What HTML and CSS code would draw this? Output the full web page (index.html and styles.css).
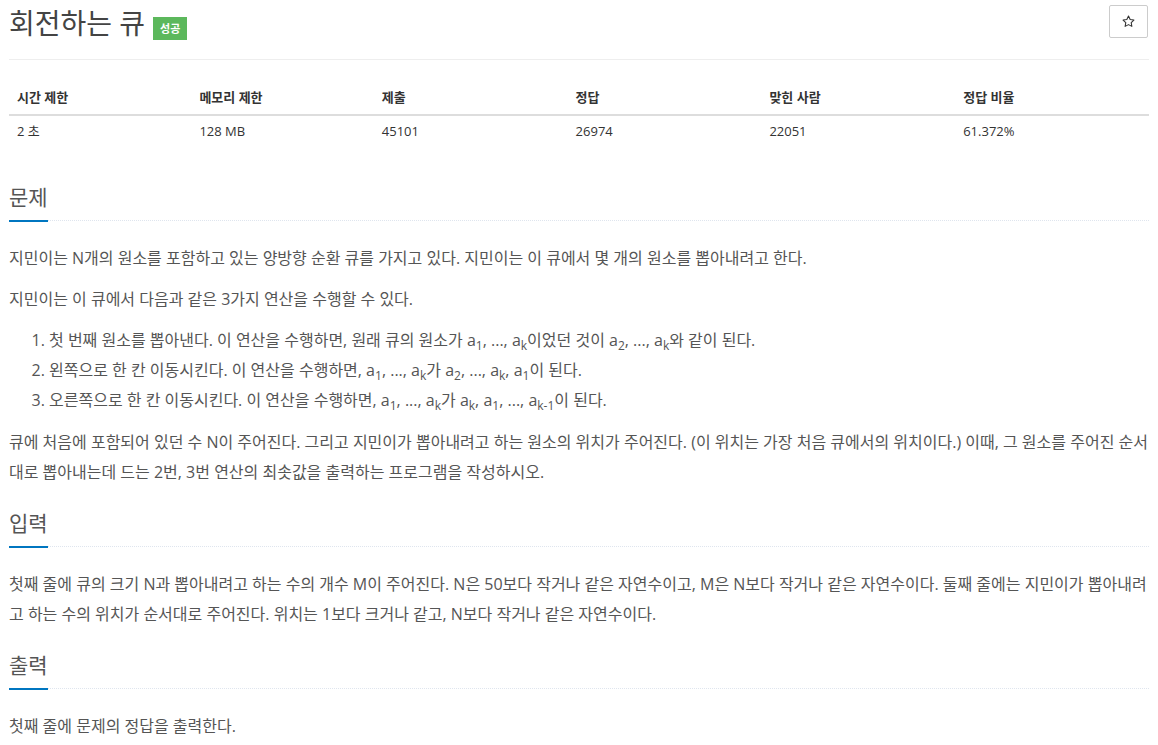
FILE: index.html
```html
<!DOCTYPE html>
<html lang="ko">
<head>
    <meta charset="UTF-8">
    <meta name="viewport" content="width=device-width, initial-scale=1.0">
    <title>회전하는 큐</title>
    <link rel="stylesheet" href="styles.css">
</head>
<body>
    <div class="page">
        <div class="page-header">
            <h1 class="problem-title">회전하는 큐<span class="label-success">성공</span></h1>
            <button class="star-btn" title="즐겨찾기">
                <svg width="13" height="13" viewBox="0 0 24 24">
                    <polygon points="12,2 15.09,8.26 22,9.27 17,14.14 18.18,21.02 12,17.77 5.82,21.02 7,14.14 2,9.27 8.91,8.26" fill="none" stroke="#333" stroke-width="2" stroke-linejoin="round"/>
                </svg>
            </button>
        </div>

        <table class="problem-info">
            <thead>
                <tr>
                    <th class="col-narrow">시간 제한</th>
                    <th class="col-narrow">메모리 제한</th>
                    <th>제출</th>
                    <th>정답</th>
                    <th>맞힌 사람</th>
                    <th>정답 비율</th>
                </tr>
            </thead>
            <tbody>
                <tr>
                    <td>2 초</td>
                    <td>128 MB</td>
                    <td>45101</td>
                    <td>26974</td>
                    <td>22051</td>
                    <td>61.372%</td>
                </tr>
            </tbody>
        </table>

        <section class="problem-section">
            <div class="headline"><h2>문제</h2></div>
            <div class="problem-text">
                <p>지민이는 N개의 원소를 포함하고 있는 양방향 순환 큐를 가지고 있다. 지민이는 이 큐에서 몇 개의 원소를 뽑아내려고 한다.</p>
                <p>지민이는 이 큐에서 다음과 같은 3가지 연산을 수행할 수 있다.</p>
                <ol>
                    <li>첫 번째 원소를 뽑아낸다. 이 연산을 수행하면, 원래 큐의 원소가 a<sub>1</sub>, ..., a<sub>k</sub>이었던 것이 a<sub>2</sub>, ..., a<sub>k</sub>와 같이 된다.</li>
                    <li>왼쪽으로 한 칸 이동시킨다. 이 연산을 수행하면, a<sub>1</sub>, ..., a<sub>k</sub>가 a<sub>2</sub>, ..., a<sub>k</sub>, a<sub>1</sub>이 된다.</li>
                    <li>오른쪽으로 한 칸 이동시킨다. 이 연산을 수행하면, a<sub>1</sub>, ..., a<sub>k</sub>가 a<sub>k</sub>, a<sub>1</sub>, ..., a<sub>k-1</sub>이 된다.</li>
                </ol>
                <p>큐에 처음에 포함되어 있던 수 N이 주어진다. 그리고 지민이가 뽑아내려고 하는 원소의 위치가 주어진다. (이 위치는 가장 처음 큐에서의 위치이다.) 이때, 그 원소를 주어진 순서대로 뽑아내는데 드는 2번, 3번 연산의 최솟값을 출력하는 프로그램을 작성하시오.</p>
            </div>
        </section>

        <section class="problem-section">
            <div class="headline"><h2>입력</h2></div>
            <div class="problem-text">
                <p>첫째 줄에 큐의 크기 N과 뽑아내려고 하는 수의 개수 M이 주어진다. N은 50보다 작거나 같은 자연수이고, M은 N보다 작거나 같은 자연수이다. 둘째 줄에는 지민이가 뽑아내려고 하는 수의 위치가 순서대로 주어진다. 위치는 1보다 크거나 같고, N보다 작거나 같은 자연수이다.</p>
            </div>
        </section>

        <section class="problem-section">
            <div class="headline"><h2>출력</h2></div>
            <div class="problem-text">
                <p>첫째 줄에 문제의 정답을 출력한다.</p>
            </div>
        </section>
    </div>
</body>
</html>
```

FILE: styles.css
```css
* {
    box-sizing: border-box;
}

body {
    margin: 0;
    font-family: "Open Sans", "Noto Sans CJK KR", sans-serif;
    color: #555;
    background-color: #fff;
}

.page {
    padding: 0 9px;
}

.page-header {
    display: flex;
    justify-content: space-between;
    align-items: flex-start;
    padding: 5px 0 19px;
    border-bottom: 1px solid #eee;
}

.problem-title {
    display: flex;
    align-items: flex-start;
    margin: 3px 0 0;
    font-size: 28px;
    line-height: 30px;
    font-weight: normal;
    color: #444;
}

.label-success {
    margin: 9px 0 0 8px;
    background-color: #5cb85c;
    color: #fff;
    font-size: 11px;
    font-weight: bold;
    line-height: 15px;
    padding: 4px 7px;
}

.star-btn {
    width: 39px;
    height: 33px;
    margin-right: 1px;
    background-color: #fff;
    border: 1px solid #ccc;
    border-radius: 2px;
    padding: 0;
    display: flex;
    align-items: center;
    justify-content: center;
    cursor: pointer;
}

/* 제한 / 통계 표 */
.problem-info {
    width: 100%;
    margin: 20px 0 37px;
    border-collapse: collapse;
    font-size: 13px;
    color: #333;
}

.problem-info th {
    text-align: left;
    font-weight: bold;
    padding: 8px;
    line-height: 18px;
    border-bottom: 2px solid #ddd;
    width: 17%;
}

.problem-info th.col-narrow {
    width: 16%;
}

.problem-info td {
    padding: 6px 8px 8px;
    line-height: 18px;
}

/* 문제 섹션 */
.problem-section {
    margin-bottom: 24px;
}

.headline {
    display: flex;
    border-bottom: 1px dotted #dfe5ee;
    margin-bottom: 22px;
}

.headline h2 {
    margin: 0 0 -2px;
    font-size: 21px;
    line-height: 24px;
    font-weight: normal;
    color: #555;
    padding-bottom: 11px;
    border-bottom: 2px solid #0076c0;
}

.problem-text {
    font-size: 16px;
    line-height: 30px;
    word-break: break-all;
}

.problem-text p {
    margin: 0 0 11px;
}

.problem-text ol {
    margin: 0 0 12px;
    padding-left: 40px;
}

sub {
    font-size: 75%;
    line-height: 0;
}
```
